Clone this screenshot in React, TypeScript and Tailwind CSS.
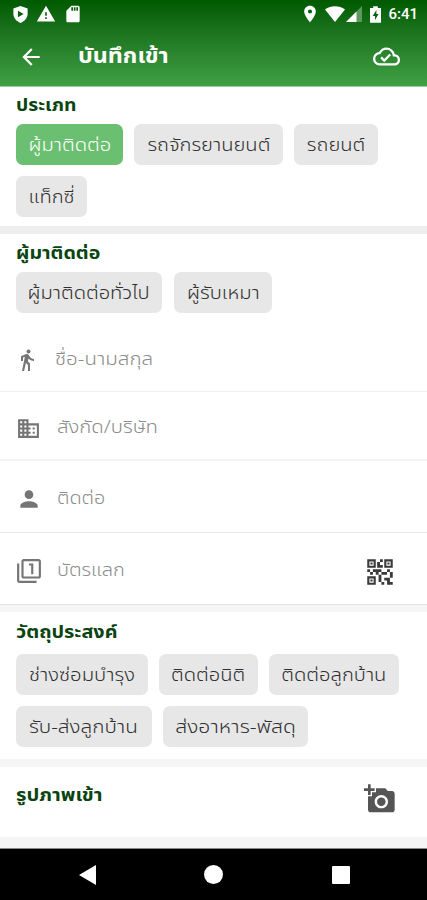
import React from "react";
import {
  MdAddAPhoto,
  MdArrowBack,
  MdBusiness,
  MdDirectionsWalk,
  MdLocationOn,
  MdOutlineCloudDone,
  MdOutlineFilter1,
  MdPerson,
  MdQrCode2,
  MdSdCard,
  MdWarning,
} from "react-icons/md";

interface ChipProps {
  label: string;
  className: string;
  stretch?: string;
  active?: boolean;
}

const Chip: React.FC<ChipProps> = ({ label, className, stretch = "scale-x-[1.12]", active }) => (
  <button
    className={`flex h-[41px] items-center justify-center whitespace-nowrap rounded-[7px] pt-px font-light ${
      active ? "bg-[#6bbf70] text-white" : "bg-[#e7e7e7] text-[#303030]"
    } ${className}`}
  >
    <span className={stretch}>{label}</span>
  </button>
);

const Heading: React.FC<{ title: string; className: string }> = ({ title, className }) => (
  <h2
    className={`origin-left whitespace-nowrap text-[18px] font-bold leading-[20px] text-[#0a4410] ${className}`}
  >
    {title}
  </h2>
);

interface FieldProps {
  icon: React.ReactNode;
  label: string;
  className: string;
  labelClass: string;
  action?: React.ReactNode;
}

const Field: React.FC<FieldProps> = ({ icon, label, className, labelClass, action }) => (
  <div className={`flex items-center pl-4 pt-[4px] ${className}`}>
    <div className="flex w-[41px] shrink-0 text-[#757575]">{icon}</div>
    <span className={`origin-left whitespace-nowrap font-light text-[#8c8c8c] ${labelClass}`}>
      {label}
    </span>
    {action}
  </div>
);

const App: React.FC = () => {
  return (
    <div className="flex h-[900px] w-[427px] flex-col overflow-hidden bg-white font-['Noto_Sans_Thai','Noto_Sans','Liberation_Sans',sans-serif] text-[18px]">
      <header className="flex h-[87px] shrink-0 flex-col border-b border-[#9bcda0] bg-linear-to-b from-[#005a00] to-[#40a045] text-white">
        <div className="flex h-7 items-center pl-[11px] pr-[9px]">
          <svg viewBox="0 0 20 20" className="h-[19px] w-[19px]">
            <path d="M10 1l7.5 2.8v5.5c0 4.500-3.200 7.800-7.500 9.700-4.300-1.900-7.500-5.200-7.500-9.700V3.800z" fill="white" />
            <path d="M7.300 6v7l6-3.500z" fill="#075f08" />
          </svg>
          <MdWarning className="ml-[6px] text-[20px]" />
          <MdSdCard className="ml-[7px] text-[20px]" />
          <div className="ml-auto flex items-center">
            <MdLocationOn className="text-[20px]" />
            <svg viewBox="0 0 20 16" className="ml-[5px] h-4 w-5">
              <path d="M0 3.500C6-.9 14-.9 20 3.500L10 16z" fill="white" />
            </svg>
            <svg viewBox="0 0 16 16" className="ml-px h-4 w-4">
              <path d="M0 16L16 0v16z" fill="#5d985d" />
              <path d="M0 16L10.500 5.500V16z" fill="white" />
            </svg>
            <svg viewBox="0 0 12 18" className="ml-[8px] h-[17px] w-[11px]">
              <path d="M3.500 0h5v2H12v16H0V2h3.500z" fill="white" />
              <path d="M7 4L3 10.500h2.500V15L9.300 8.500H7z" fill="#0a620c" />
            </svg>
            <span className="ml-[7px] font-[Roboto] text-[15px] font-medium">6:41</span>
          </div>
        </div>
        <div className="flex h-[57px] items-center pl-[18px] pr-[27px]">
          <MdArrowBack className="text-[26px]" />
          <h1 className="ml-[34px] origin-left scale-x-[1.06] whitespace-nowrap text-[22px] font-bold">
            บันทึกเข้า
          </h1>
          <MdOutlineCloudDone className="ml-auto text-[27px]" />
        </div>
      </header>

      <section className="flex h-[139px] shrink-0 flex-col px-4 pt-[9px]">
        <Heading title="ประเภท" className="scale-x-[1.07]" />
        <div className="mt-[8px] flex flex-wrap gap-x-[11px] gap-y-[11px]">
          <Chip label="ผู้มาติดต่อ" active className="w-[107px]" />
          <Chip label="รถจักรยานยนต์" className="w-[149px]" />
          <Chip label="รถยนต์" className="w-[84px]" />
          <Chip label="แท็กซี่" className="w-[71px]" />
        </div>
      </section>
      <div className="h-2 shrink-0 bg-[#eeeeee]" />

      <section className="flex h-[371px] shrink-0 flex-col">
        <div className="px-4 pt-[10px]">
          <Heading title="ผู้มาติดต่อ" className="scale-x-[1.09]" />
          <div className="mt-[8px] flex gap-[12px]">
            <Chip label="ผู้มาติดต่อทั่วไป" className="w-[146px]" />
            <Chip label="ผู้รับเหมา" className="w-[98px]" />
          </div>
        </div>
        <Field
          className="mt-[11px] h-[68px] border-b border-[#f1f1f1]"
          icon={<MdDirectionsWalk className="-ml-px text-[24px]" />}
          label="ชื่อ-นามสกุล"
          labelClass="-ml-0.5 scale-x-[1.14]"
        />
        <Field
          className="h-[69px] border-b-2 border-[#f3f3f3]"
          icon={<MdBusiness className="mt-px text-[25px]" />}
          label="สังกัด/บริษัท"
          labelClass="scale-x-[1.13]"
        />
        <Field
          className="h-[72px] border-b border-[#e6e6e6]"
          icon={<MdPerson className="mt-px text-[26px]" />}
          label="ติดต่อ"
          labelClass="scale-x-[1.1]"
        />
        <Field
          className="h-[72px] border-b border-[#e3e3e3]"
          icon={<MdOutlineFilter1 className="mt-px text-[26px]" />}
          label="บัตรแลก"
          labelClass="scale-x-[1.11]"
          action={<MdQrCode2 className="ml-auto mr-[30px] mt-[2px] text-[34px] text-[#3a3a3a]" />}
        />
      </section>
      <div className="h-[7px] shrink-0 bg-[#f5f5f5]" />

      <section className="flex h-[147px] shrink-0 flex-col px-4 pt-[11px]">
        <Heading title="วัตถุประสงค์" className="scale-x-[1.1]" />
        <div className="mt-[11px] flex flex-wrap gap-[11px]">
          <Chip label="ช่างซ่อมบำรุง" className="w-[132px]" stretch="scale-x-[1.13]" />
          <Chip label="ติดต่อนิติ" className="w-[99px]" />
          <Chip label="ติดต่อลูกบ้าน" className="w-[130px]" />
          <Chip label="รับ-ส่งลูกบ้าน" className="w-[135.500px]" stretch="scale-x-[1.15]" />
          <Chip label="ส่งอาหาร-พัสดุ" className="w-[145.500px]" stretch="scale-x-[1.17]" />
        </div>
      </section>
      <div className="h-2 shrink-0 bg-[#f5f5f5]" />

      <section className="flex h-[70px] shrink-0 justify-between pl-4 pr-[31px] pt-[16px]">
        <Heading title="รูปภาพเข้า" className="pt-[3px] scale-x-[1.12]" />
        <MdAddAPhoto className="text-[32px] text-[#555555]" />
      </section>
      <div className="h-[12px] shrink-0 border-b border-[#888888] bg-[#f5f5f5]" />

      <nav className="flex flex-1 items-center bg-black pl-[79px]">
        <svg viewBox="0 0 17 20" className="h-5 w-[17px]">
          <path d="M17 0v20L0 10z" fill="white" />
        </svg>
        <div className="ml-[108px] h-[19px] w-[19px] rounded-full bg-white" />
        <div className="ml-[109px] h-[18px] w-[18px] rounded-[1px] bg-white" />
      </nav>
    </div>
  );
};

export default App;
